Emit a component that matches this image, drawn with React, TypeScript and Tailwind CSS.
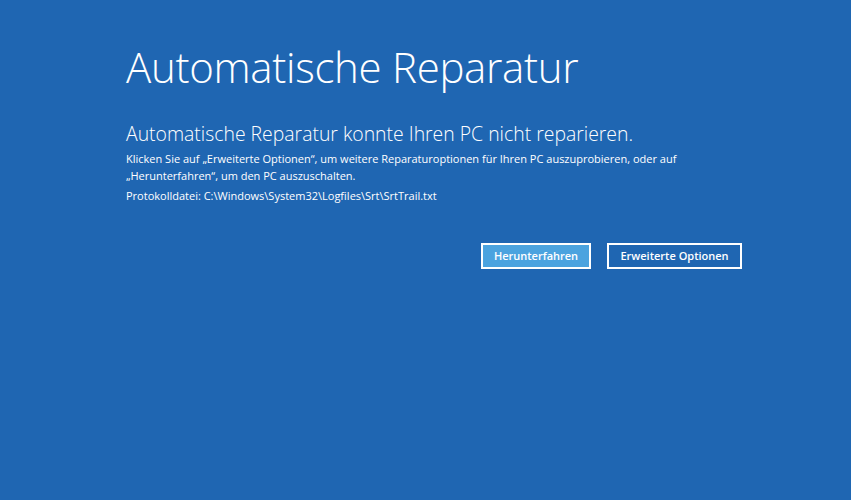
export default function App() {
  return (
    <div className="h-[500px] w-full bg-[#1f66b2] text-white font-['Open_Sans','Noto_Sans',sans-serif] overflow-hidden">
      <div className="pl-[126px] pt-[41px] w-[742px]">
        <h1 className="text-[42px] font-light leading-[52px] tracking-[-0.3px]">Automatische Reparatur</h1>
        <h2 className="mt-[28px] text-[19.4px] font-light leading-[26px]">
          Automatische Reparatur konnte Ihren PC nicht reparieren.
        </h2>
        <p className="mt-[3px] text-[11px] leading-[17px] w-[600px]">
          Klicken Sie auf „Erweiterte Optionen“, um weitere Reparaturoptionen für Ihren PC auszuprobieren, oder auf
          „Herunterfahren“, um den PC auszuschalten.
        </p>
        <p className="mt-[3px] text-[11px] leading-[17px]">Protokolldatei: C:\Windows\System32\Logfiles\Srt\SrtTrail.txt</p>
        <div className="mt-[39px] flex justify-end gap-4">
          <button className="h-[26px] w-[110px] border-2 border-white bg-[#4ba3df] text-[11px] font-semibold">
            Herunterfahren
          </button>
          <button className="h-[26px] w-[135px] border-2 border-white bg-[#1f66b2] text-[11px] font-semibold">
            Erweiterte Optionen
          </button>
        </div>
      </div>
    </div>
  );
}
